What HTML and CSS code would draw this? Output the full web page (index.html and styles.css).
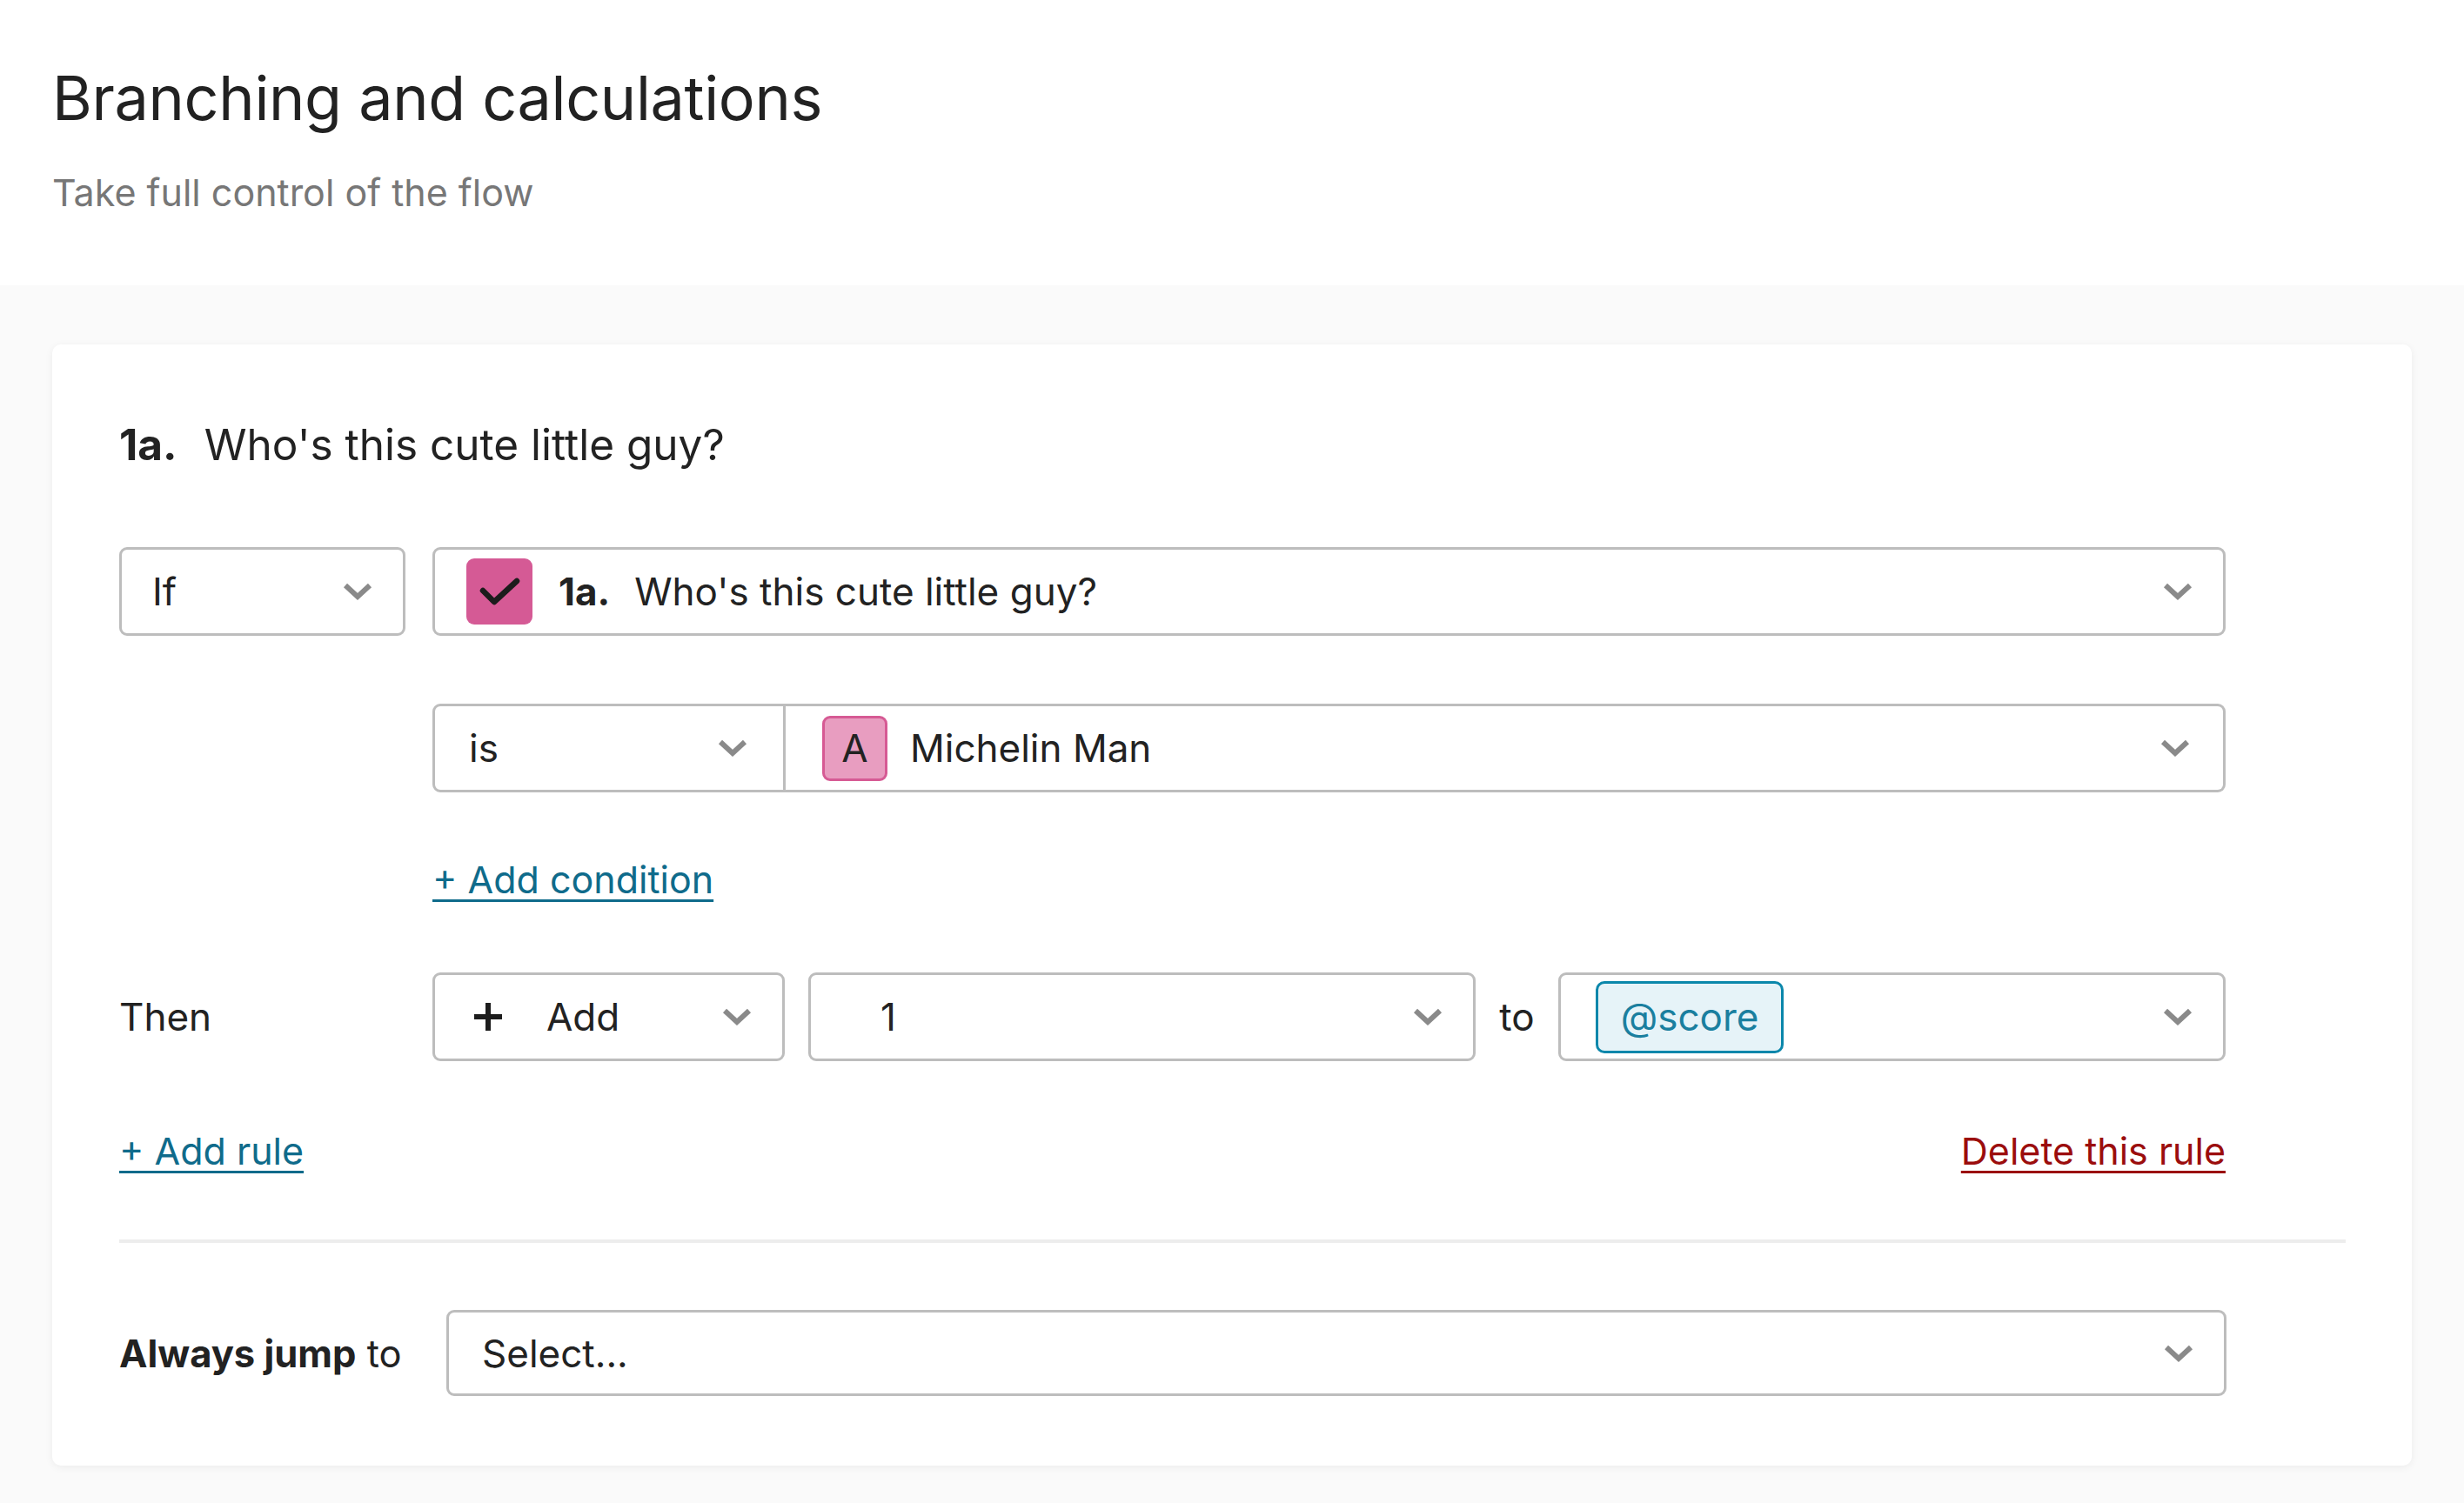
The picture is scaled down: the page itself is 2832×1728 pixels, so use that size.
FILE: index.html
```html
<!DOCTYPE html>
<html lang="en">
<head>
<meta charset="utf-8">
<title>Branching and calculations</title>
<link rel="stylesheet" href="styles.css">
</head>
<body>
<header class="page-header">
  <h1 class="title">Branching and calculations</h1>
  <p class="subtitle">Take full control of the flow</p>
</header>
<main class="band">
  <section class="card">
    <h2 class="q-title"><span class="q-num">1a.</span>Who's this cute little guy?</h2>

    <div class="rules">
      <div class="rule-row row-if">
        <div class="select sel-if">
          <span class="sel-text">If</span>
          <svg class="chev" viewBox="0 0 36 22"><polyline points="4,4 18,17 32,4"/></svg>
        </div>
        <div class="select sel-question">
          <span class="check"><svg viewBox="0 0 76 76"><polyline points="19,37 32,50 58,26"/></svg></span>
          <span class="opt-num">1a.</span>
          <span class="sel-text">Who's this cute little guy?</span>
          <svg class="chev" viewBox="0 0 36 22"><polyline points="4,4 18,17 32,4"/></svg>
        </div>
      </div>

      <div class="rule-row row-cond">
        <div class="cell-empty"></div>
        <div class="cond-group">
          <div class="select sel-is">
            <span class="sel-text">is</span>
            <svg class="chev" viewBox="0 0 36 22"><polyline points="4,4 18,17 32,4"/></svg>
          </div>
          <div class="select sel-answer">
            <span class="letter">A</span>
            <span class="sel-text">Michelin Man</span>
            <svg class="chev" viewBox="0 0 36 22"><polyline points="4,4 18,17 32,4"/></svg>
          </div>
        </div>
      </div>

      <div class="rule-row row-addcond">
        <div class="cell-empty"></div>
        <div><a class="link" href="#">+ Add condition</a></div>
      </div>

      <div class="rule-row row-then">
        <div class="row-label">Then</div>
        <div class="action-group">
          <div class="select sel-op">
            <svg class="plus" viewBox="0 0 36 36"><line x1="18" y1="2" x2="18" y2="34"/><line x1="2" y1="18" x2="34" y2="18"/></svg>
            <span class="sel-text">Add</span>
            <svg class="chev" viewBox="0 0 36 22"><polyline points="4,4 18,17 32,4"/></svg>
          </div>
          <div class="select sel-value">
            <span class="sel-text value-text">1</span>
            <svg class="chev" viewBox="0 0 36 22"><polyline points="4,4 18,17 32,4"/></svg>
          </div>
          <span class="to-label">to</span>
          <div class="select sel-var">
            <span class="chip">@score</span>
            <svg class="chev" viewBox="0 0 36 22"><polyline points="4,4 18,17 32,4"/></svg>
          </div>
        </div>
      </div>

      <div class="row-links">
        <a class="link" href="#">+ Add rule</a>
        <a class="link link-danger" href="#">Delete this rule</a>
      </div>
    </div>

    <hr class="divider">

    <div class="jump-row">
      <div class="jump-label"><strong>Always jump</strong> to</div>
      <div class="select sel-jump">
        <span class="sel-text">Select...</span>
        <svg class="chev" viewBox="0 0 36 22"><polyline points="4,4 18,17 32,4"/></svg>
      </div>
    </div>
  </section>
</main>
</body>
</html>
```

FILE: styles.css
```css
html, body {
  margin: 0;
  padding: 0;
}

body {
  font-family: Inter, "Liberation Sans", Arial, sans-serif;
  color: #222;
  background: #fff;
}

/* Header */
.page-header {
  padding: 71px 60px 81px 60px;
}

.title {
  margin: 0;
  font-size: 70px;
  line-height: 84px;
  font-weight: 400;
  color: #222;
  letter-spacing: -0.3px;
}

.subtitle {
  margin: 40px 0 0 0;
  font-size: 43px;
  line-height: 52px;
  color: #777;
}

/* Band + card */
.band {
  background: #fafafa;
  padding: 68px 60px 44px 60px;
}

.card {
  background: #fff;
  border-radius: 10px;
  box-shadow: 0 2px 10px rgba(0, 0, 0, 0.06);
  padding: 86px 76px 80px 77px;
}

.q-title {
  margin: 0;
  font-size: 49.5px;
  line-height: 58px;
  font-weight: 400;
  color: #222;
}

.q-num {
  font-weight: 700;
  margin-right: 31px;
}

.rules {
  width: 2421px;
  margin-top: 89px;
}

.rule-row {
  display: grid;
  grid-template-columns: 329px 1fr;
  column-gap: 31px;
  align-items: center;
}

.row-cond { margin-top: 78px; }
.row-addcond { margin-top: 74px; }
.row-then { margin-top: 80px; }

/* Select boxes */
.select {
  display: flex;
  align-items: center;
  box-sizing: border-box;
  height: 102px;
  border: 3px solid #bdbdbd;
  border-radius: 9px;
  background: #fff;
  padding: 0 34px 0 35px;
  font-size: 44px;
  color: #222;
}

.sel-text {
  white-space: nowrap;
}

.chev {
  width: 36px;
  height: 22px;
  margin-left: auto;
  flex: none;
}

.chev polyline {
  fill: none;
  stroke: #8a8a8a;
  stroke-width: 6;
  stroke-linecap: butt;
  stroke-linejoin: miter;
}

.sel-question {
  padding-left: 36px;
}

.check {
  width: 76px;
  height: 76px;
  border-radius: 9px;
  background: #d55a95;
  flex: none;
  display: block;
}

.check svg {
  width: 76px;
  height: 76px;
  display: block;
}

.check polyline {
  fill: none;
  stroke: #1c1c1c;
  stroke-width: 6.5;
  stroke-linecap: round;
  stroke-linejoin: round;
}

.opt-num {
  font-weight: 700;
  margin-left: 30px;
  margin-right: 28px;
}

/* Condition */
.cond-group {
  display: flex;
}

.sel-is {
  width: 406px;
  flex: none;
  border-radius: 9px 0 0 9px;
  padding-left: 39px;
  padding-right: 40px;
}

.sel-answer {
  flex: 1;
  border-left: 0;
  border-radius: 0 9px 9px 0;
  padding-left: 42px;
  padding-right: 37px;
}

.letter {
  width: 75px;
  height: 75px;
  box-sizing: border-box;
  border: 3px solid #d65a94;
  border-radius: 9px;
  background: #e89dc0;
  display: flex;
  align-items: center;
  justify-content: center;
  font-size: 44px;
  color: #222;
  margin-right: 26px;
  flex: none;
}

/* Links */
.link {
  font-size: 43px;
  line-height: 53px;
  color: #0f6b8b;
  text-decoration: underline;
  text-decoration-thickness: 3px;
  text-underline-offset: 7px;
}

.link-danger {
  color: #9b0d0d;
}

/* Then row */
.row-label {
  font-size: 44px;
  color: #222;
}

.action-group {
  display: flex;
  align-items: center;
  gap: 27px;
}

.sel-op {
  width: 405px;
  flex: none;
  padding-left: 43px;
}

.plus {
  width: 36px;
  height: 36px;
  flex: none;
  margin-right: 49px;
}

.plus line {
  stroke: #1c1c1c;
  stroke-width: 6;
}

.sel-value,
.sel-var {
  flex: 1 1 0;
  min-width: 0;
  padding-left: 40px;
}

.value-text {
  margin-left: 40px;
}

.to-label {
  font-size: 44px;
  color: #222;
}

.chip {
  box-sizing: border-box;
  height: 83px;
  display: flex;
  align-items: center;
  padding: 0 26px;
  border: 3px solid #0b87ab;
  border-radius: 10px;
  background: #e6f3f8;
  color: #1a7f9f;
  font-size: 44px;
}

.row-links {
  margin-top: 77px;
  display: flex;
  justify-content: space-between;
  line-height: 53px;
}

/* Divider */
.divider {
  margin: 75px 0 0 0;
  border: 0;
  height: 4px;
  background: #ededed;
}

/* Always jump */
.jump-row {
  margin-top: 77px;
  display: flex;
  align-items: center;
  width: 2422px;
}

.jump-label {
  font-size: 43.5px;
  color: #222;
  width: 376px;
  flex: none;
}

.jump-label strong {
  font-weight: 700;
}

.sel-jump {
  flex: 1;
  height: 99px;
  padding-left: 38px;
}
```
